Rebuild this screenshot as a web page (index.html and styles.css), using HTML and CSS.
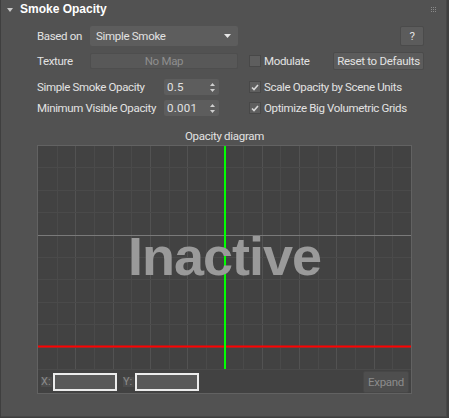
FILE: index.html
```html
<!DOCTYPE html>
<html lang="en">
<head>
    <meta charset="UTF-8">
    <title>Smoke Opacity</title>
    <link rel="stylesheet" href="styles.css">
</head>
<body>

    <div class="panel">
        <div class="panel-head">
            <svg class="fold" width="6" height="5" viewBox="0 0 6 5"><polygon points="0,0 6,0 3,4" fill="#c8c8c8"/></svg>
            <span class="panel-title">Smoke Opacity</span>
            <svg class="grip" width="6" height="6" viewBox="0 0 6 6" fill="#8a8a8a">
                <rect x="0" y="0" width="1" height="1"/><rect x="2" y="0" width="1" height="1"/><rect x="4" y="0" width="1" height="1"/>
                <rect x="0" y="2" width="1" height="1"/><rect x="2" y="2" width="1" height="1"/><rect x="4" y="2" width="1" height="1"/>
                <rect x="0" y="4" width="1" height="1"/><rect x="2" y="4" width="1" height="1"/><rect x="4" y="4" width="1" height="1"/>
            </svg>
        </div>

        <div class="panel-body">
            <div class="row row-based">
                <span class="label label-short">Based on</span>
                <div class="dropdown">
                    <span>Simple Smoke</span>
                    <svg width="7" height="4" viewBox="0 0 7 4"><polygon points="0,0 7,0 3.5,4" fill="#e6e6e6"/></svg>
                </div>
                <button class="btn btn-help">?</button>
            </div>

            <div class="row row-texture">
                <span class="label label-short">Texture</span>
                <button class="btn btn-map" disabled>No Map</button>
                <span class="check"></span>
                <span class="label">Modulate</span>
                <button class="btn btn-reset">Reset to Defaults</button>
            </div>

            <div class="row row-spin">
                <span class="label label-long">Simple Smoke Opacity</span>
                <div class="spinner">
                    <span>0.5</span>
                    <svg width="5" height="9" viewBox="0 0 5 9" fill="#cfcfcf"><polygon points="2.5,0 5,3 0,3"/><polygon points="0,6 5,6 2.5,9"/></svg>
                </div>
                <span class="check checked">
                    <svg width="8" height="7" viewBox="0 0 8 7"><polyline points="1,3.5 3,5.5 7,1" fill="none" stroke="#d8d8d8" stroke-width="1.6"/></svg>
                </span>
                <span class="label">Scale Opacity by Scene Units</span>
            </div>

            <div class="row row-spin row-spin2">
                <span class="label label-long">Minimum Visible Opacity</span>
                <div class="spinner">
                    <span>0.001</span>
                    <svg width="5" height="9" viewBox="0 0 5 9" fill="#cfcfcf"><polygon points="2.5,0 5,3 0,3"/><polygon points="0,6 5,6 2.5,9"/></svg>
                </div>
                <span class="check checked">
                    <svg width="8" height="7" viewBox="0 0 8 7"><polyline points="1,3.5 3,5.5 7,1" fill="none" stroke="#d8d8d8" stroke-width="1.6"/></svg>
                </span>
                <span class="label">Optimize Big Volumetric Grids</span>
            </div>

            <div class="caption">Opacity diagram</div>

            <div class="diagram">
                <div class="plot">
                    <svg id="grid" width="373" height="224" viewBox="0 0 373 224"></svg>
                    <div class="inactive">Inactive</div>
                </div>
                <div class="plot-foot">
                    <span class="axis">X:</span>
                    <span class="coord"></span>
                    <span class="axis axis-y">Y:</span>
                    <span class="coord"></span>
                    <button class="btn btn-expand" disabled>Expand</button>
                </div>
            </div>
        </div>
    </div>

    <script>
        // draw the diagram grid: 20 columns, 10 rows, every other column brighter
        const svg = document.getElementById("grid");
        const ns = "http://www.w3.org/2000/svg";
        const colW = 373 / 20;
        const rowH = 22.4;

        function line(x1, y1, x2, y2, color, width) {
            const l = document.createElementNS(ns, "line");
            l.setAttribute("x1", x1);
            l.setAttribute("y1", y1);
            l.setAttribute("x2", x2);
            l.setAttribute("y2", y2);
            l.setAttribute("stroke", color);
            l.setAttribute("stroke-width", width);
            svg.appendChild(l);
        }

        for (let k = 1; k < 20; k++) {
            const x = Math.round(k * colW) + 0.5;
            line(x, 0, x, 224, k % 2 === 0 ? "#525252" : "#4a4a4a", 1);
        }
        for (let k = 1; k <= 10; k++) {
            const y = Math.round(k * rowH - 1) + 0.5;
            line(0, y, 373, y, "#4a4a4a", 1);
        }

        // mid line, curve and cursor
        line(0, Math.round(4 * rowH - 1) + 0.5, 373, Math.round(4 * rowH - 1) + 0.5, "#7a7a7a", 1);
        line(0, 200.6, 373, 200.6, "#ff0000", 2);
        line(187, 0, 187, 223, "#00ff00", 2);
    </script>

</body>
</html>
```

FILE: styles.css
```css
body {
    margin: 0;
    background-color: #3f3f3f;
    font-family: 'Roboto', 'Liberation Sans', sans-serif;
    font-size: 11.5px;
    color: #e2e2e2;
}
.panel {
    width: 445px;
    height: 416px;
    margin-left: 1px;
    background: #525252;
    border-right: 1px solid #474747;
    border-bottom: 1px solid #474747;
}
.panel-head {
    height: 22px;
    display: flex;
    align-items: center;
    position: relative;
}
.fold {
    margin-left: 6px;
    margin-top: -2px;
}
.panel-title {
    margin-left: 7px;
    margin-top: -4px;
    font-family: 'Liberation Sans', sans-serif;
    font-weight: bold;
    font-size: 12px;
    color: #ffffff;
}
.grip {
    position: absolute;
    right: 9px;
    top: 7px;
}
.panel-body {
    padding-left: 36px;
    padding-right: 22px;
}
.row {
    display: flex;
    align-items: center;
}
.label {
    white-space: nowrap;
    letter-spacing: -0.35px;
}
.label-short {
    width: 53px;
}
.label-long {
    width: 127px;
}
.row-based {
    height: 20px;
    margin-top: 4px;
}
.row-texture {
    height: 18px;
    margin-top: 6px;
}
.row-spin {
    height: 16px;
    margin-top: 9px;
}
.row-spin2 {
    margin-top: 5px;
}
.btn {
    font-family: 'Roboto', 'Liberation Sans', sans-serif;
    font-size: 11.5px;
    color: #e2e2e2;
    background: #5c5c5c;
    border: 1px solid #4b4b4b;
    border-radius: 2px;
    padding: 0;
    letter-spacing: -0.3px;
}
.dropdown {
    width: 148px;
    height: 20px;
    box-sizing: border-box;
    background: #5d5d5d;
    border-radius: 2px;
    display: flex;
    align-items: center;
    justify-content: space-between;
    padding: 0 7px 0 6px;
    letter-spacing: -0.3px;
}
.btn-help {
    margin-left: auto;
    width: 24px;
    height: 20px;
}
.btn-map {
    width: 148px;
    height: 16px;
    color: #8e8e8e;
    background: #585858;
    border-color: #4e4e4e;
}
.check {
    width: 10px;
    height: 10px;
    background: #5e5e5e;
    border: 1px solid #484848;
    margin-left: 11px;
    margin-right: 3px;
    display: flex;
    align-items: center;
    justify-content: center;
}
.row-spin .check {
    margin-left: 30px;
}
.btn-reset {
    margin-left: auto;
    width: 91px;
    height: 18px;
}
.spinner {
    width: 55px;
    height: 16px;
    box-sizing: border-box;
    background: #5d5d5d;
    border-radius: 2px;
    display: flex;
    align-items: center;
    justify-content: space-between;
    padding: 0 4px 0 3px;
    letter-spacing: 0.3px;
}
.caption {
    margin-top: 11px;
    width: 375px;
    text-align: center;
    line-height: 18px;
    letter-spacing: -0.3px;
}
.diagram {
    width: 373px;
    height: 247px;
    border: 1px solid #626262;
    background: #424242;
}
.plot {
    position: relative;
    height: 224px;
}
#grid {
    display: block;
}
.inactive {
    position: absolute;
    left: 0;
    right: 0;
    top: 83px;
    text-align: center;
    font-family: 'Liberation Sans', sans-serif;
    font-weight: bold;
    font-size: 54px;
    line-height: 1;
    letter-spacing: -1px;
    color: #9a9a9a;
}
.plot-foot {
    height: 23px;
    display: flex;
    align-items: center;
    padding-left: 3px;
    padding-right: 2px;
}
.axis {
    width: 11px;
    height: 10px;
    background: #4c4c4c;
    color: #8a8a8a;
    font-size: 11px;
    line-height: 10px;
}
.axis-y {
    margin-left: 6px;
}
.coord {
    width: 60px;
    height: 14px;
    border: 2px solid #ececec;
    background: #595959;
    margin-left: 1px;
}
.btn-expand {
    margin-left: auto;
    width: 46px;
    height: 22px;
    color: #8c8c8c;
    background: #4e4e4e;
    border-color: #474747;
}
```
